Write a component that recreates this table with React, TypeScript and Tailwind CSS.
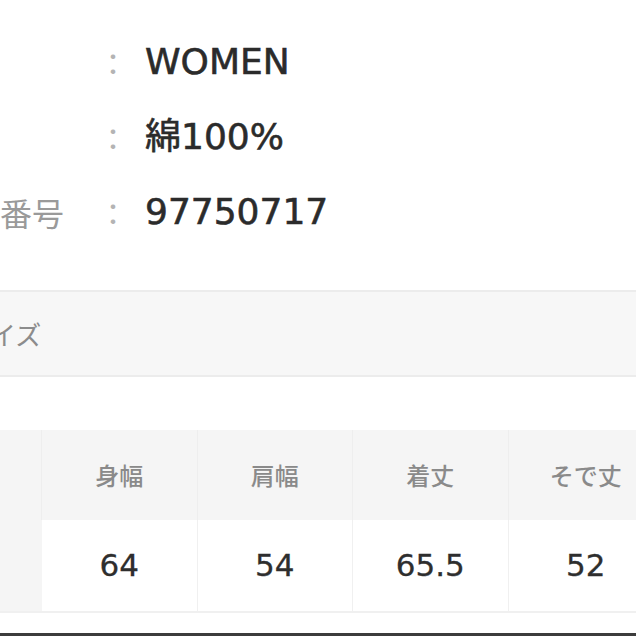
import React from 'react'

const cjk = "font-['Noto_Sans_CJK_JP',sans-serif]"
const latin = "font-['DejaVu_Sans','Noto_Sans_CJK_JP',sans-serif]"

const specs = [
  { label: '性別', value: 'WOMEN' },
  { label: '素材', value: '綿100%' },
  { label: '商品番号', value: '97750717' },
]

const heads = ['身幅', '肩幅', '着丈', 'そで丈']
const sizes = ['64', '54', '65.5', '52']

export default function App() {
  return (
    <div className="w-[636px] h-[636px] overflow-hidden bg-white flex flex-col">
      <div className="pt-[24px] -ml-[64px]">
        {specs.map((s) => (
          <div key={s.label} className="h-[75px] flex items-center">
            <span className={`${cjk} w-[159px] shrink-0 text-[32px] text-[#9a9a9a] leading-none`}>{s.label}</span>
            <span className={`${cjk} w-[36px] shrink-0 text-center text-[30px] text-[#b4b4b4] leading-none`}>：</span>
            <span className={`${latin} ml-[14px] text-[36px] text-[#2b2b2b] leading-none whitespace-nowrap [-webkit-text-stroke:0.6px_#2b2b2b]`}>
              {s.value}
            </span>
          </div>
        ))}
      </div>

      <div className="mt-[41px] h-[87px] shrink-0 bg-[#f7f7f7] border-y-2 border-[#ececec] flex items-center -ml-[36px]">
        <span className={`${cjk} text-[26px] text-[#8c8c8c] leading-none`}>サイズ</span>
      </div>

      <div className="mt-[53px] flex flex-col shrink-0">
        <div className="h-[90px] flex bg-[#f5f5f5]">
          <div className="w-[42px] shrink-0 border-r border-[#eeeeee]" />
          {heads.map((h) => (
            <div key={h} className={`${cjk} w-[155.5px] shrink-0 border-r border-[#eeeeee] flex items-center justify-center text-[24px] font-medium text-[#8a8a8a]`}>
              {h}
            </div>
          ))}
        </div>
        <div className="h-[93px] flex border-b-2 border-[#f0f0f0]">
          <div className="w-[42px] shrink-0 bg-[#f5f5f5]" />
          {sizes.map((v) => (
            <div key={v} className={`${latin} w-[155.5px] shrink-0 bg-white border-r border-[#f0f0f0] flex items-center justify-center text-[31px] text-[#2e2e2e] [-webkit-text-stroke:0.3px_#2e2e2e]`}>
              {v}
            </div>
          ))}
        </div>
      </div>

      <div className="flex-1" />
      <div className="h-[3px] shrink-0 bg-[#3c3c3c]" />
    </div>
  )
}
